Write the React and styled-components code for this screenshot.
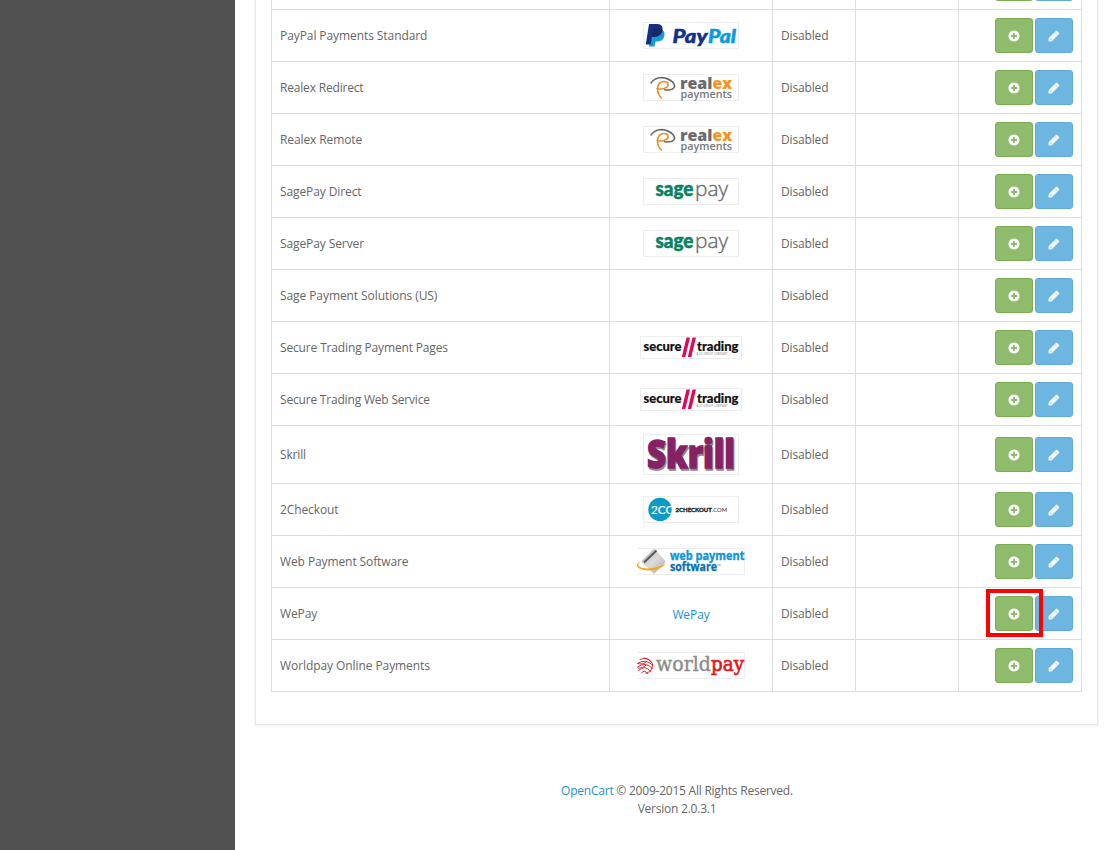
import React from 'react';
import styled, { createGlobalStyle } from 'styled-components';

const GlobalStyle = createGlobalStyle`
  * { box-sizing: border-box; }
  body {
    margin: 0;
    background: #fff;
    color: #666;
    font: 12px/18px "Open Sans", "Noto Sans", sans-serif;
  }
`;

const Page = styled.div`
  display: flex;
  height: 850px;
  overflow: hidden;
`;

const Sidebar = styled.aside`
  flex: 0 0 235px;
  background: #515151;
`;

const Content = styled.main`
  flex: 1;
  padding: 0 20px;
`;

const Panel = styled.section`
  width: 843px;
  height: 725px;
  padding: 0 15px;
  border: 1px solid #e8e8e8;
  border-top: 0;
  box-shadow: 0 1px 1px 1px rgba(0, 0, 0, 0.03);
`;

const Table = styled.div`
  width: 811px;
  border-left: 1px solid #ddd;
`;

const Row = styled.div`
  display: grid;
  grid-template-columns: 338px 163px 83px 103px 123px;
  grid-template-rows: minmax(0, 1fr);
  height: ${(p) => p.$height}px;
`;

const Cell = styled.div`
  display: flex;
  min-height: 0;
  align-items: ${(p) => (p.$clipped ? 'flex-end' : 'center')};
  justify-content: ${(p) => p.$align || 'flex-start'};
  padding: 0 8px ${(p) => (p.$clipped ? 8 : 0)}px;
  border-right: 1px solid #ddd;
  border-bottom: 1px solid #ddd;
  letter-spacing: ${(p) => p.$tracking || 0}px;
  white-space: nowrap;
`;

const Actions = styled.div`
  display: flex;
  gap: 2px;
`;

const IconButton = styled.button`
  display: flex;
  align-items: center;
  justify-content: center;
  width: 38px;
  height: 35px;
  padding: 0;
  border: 1px solid ${(p) => (p.$green ? '#7aae50' : '#5fabd6')};
  border-radius: 3px;
  background: ${(p) => (p.$green ? '#8fbb6c' : '#6db6e1')};
  color: #fff;
`;

const Marked = styled.div`
  position: relative;
  display: flex;
`;

const Highlight = styled.span`
  position: absolute;
  z-index: 1;
  top: -7px;
  left: -9px;
  width: 57px;
  height: 48px;
  border: 4px solid #f00;
`;

const Link = styled.a`
  color: #1e91cf;
  text-decoration: none;
`;

const LogoLink = styled(Link)`
  padding-top: 2px;
  letter-spacing: -0.1px;
`;

const LogoFrame = styled.span`
  display: flex;
  width: ${(p) => p.$w}px;
  height: ${(p) => p.$h}px;
  border: 1px solid #eee;
  letter-spacing: 0;
  ${(p) => p.$bleed && 'border-left-color: transparent;'}

  svg {
    flex: none;
    margin: -1px;
  }
`;

const Footer = styled.footer`
  width: 843px;
  padding: 57px 0 0 1px;
  letter-spacing: -0.23px;
  text-align: center;
`;

const PlusCircle = () => (
  <svg width="12" height="12" viewBox="-70 -70 1676 1676" fill="currentColor">
    <path d="M1216 832v-128q0-26-19-45t-45-19h-256v-256q0-26-19-45t-45-19h-128q-26 0-45 19t-19 45v256h-256q-26 0-45 19t-19 45v128q0 26 19 45t45 19h256v256q0 26 19 45t45 19h128q26 0 45-19t19-45v-256h256q26 0 45-19t19-45zm320-64q0 209-103 385.5t-279.5 279.5-385.5 103-385.5-103-279.5-279.5-103-385.5 103-385.5 279.5-279.5 385.5-103 385.5 103 279.5 279.5 103 385.5z" />
  </svg>
);

const Pencil = () => (
  <svg width="12" height="12" viewBox="0 0 1792 1792" fill="currentColor" stroke="currentColor" strokeWidth="70">
    <path d="M491 1536l91-91-235-235-91 91v107h128v128h107zm523-928q0-22-22-22-10 0-17 7l-542 542q-7 7-7 17 0 22 22 22 10 0 17-7l542-542q7-7 7-17zm-54-192l416 416-832 832h-416v-416zm683 96q0 53-37 90l-166 166-416-416 166-165q36-38 90-38 53 0 91 38l235 234q37 39 37 91z" />
  </svg>
);

const Logo = ({ w = 96, h = 27, bleed, children }) => (
  <LogoFrame $w={w} $h={h} $bleed={bleed}>
    <svg width={w} height={h} viewBox={`0 0 ${w} ${h}`}>{children}</svg>
  </LogoFrame>
);

const PayPal = () => (
  <Logo>
    <path d="M9 7h8q5 1 4.500 6-1 6.500-7 6.500h-2l-1 5H6z" fill="#179bd7" />
    <path d="M6 2h8.500q6 .5 5 6.500-1.200 6.500-8 6.500H9L7.700 22.500H2.800z" fill="#172f80" />
    <path d="M10 7.500q0-1 1-1h6l2.200.8q-.8 7.200-8 7.200H8.800z" fill="#1d2761" />
    <g fontFamily="Lato" fontWeight="900" fontStyle="italic" fontSize="18.500" strokeWidth=".5">
      <text x="29.500" y="21" textLength="35" lengthAdjust="spacingAndGlyphs" fill="#12308a" stroke="#12308a">Pay</text>
      <text x="65" y="21" textLength="28" lengthAdjust="spacingAndGlyphs" fill="#089cdd" stroke="#089cdd">Pal</text>
    </g>
  </Logo>
);

const Realex = () => (
  <Logo>
    <g fill="none" strokeLinecap="round">
      <path d="M8 9C12 3 20 2.500 25 5c7 3.500 8 8 4.500 10q-3.500 1.500-8 .7" stroke="#686a6c" strokeWidth="1.500" />
      <path d="M18 4c7 0 13 4 14 8" stroke="#686a6c" strokeWidth=".8" />
      <path d="M18.500 24C13.500 20 12.500 9 20 7.500c6-.5 7 5 1 7-3 .8-5 .8-7 0" stroke="#f28c22" strokeWidth="1.600" />
    </g>
    <g fontFamily="Open Sans">
      <g fontSize="16.500" fontWeight="800">
        <text x="37" y="15" textLength="32.500" lengthAdjust="spacingAndGlyphs" fill="#696b6d">real</text>
        <text x="69.500" y="15" textLength="19.500" lengthAdjust="spacingAndGlyphs" fill="#f7941e">ex</text>
      </g>
      <text x="37.500" y="23.800" fontSize="11.500" fontWeight="600" textLength="51.500" lengthAdjust="spacingAndGlyphs" fill="#77797b">payments</text>
    </g>
  </Logo>
);

const SagePay = () => (
  <Logo>
    <text x="12.500" y="18" fontFamily="Lato" fontSize="20.500" fontWeight="900" textLength="38" lengthAdjust="spacingAndGlyphs" fill="#078263" stroke="#078263" strokeWidth=".5">sage</text>
    <text x="52" y="18" fontFamily="Open Sans" fontSize="20.500" fontWeight="300" textLength="33" lengthAdjust="spacingAndGlyphs" fill="#696c70" stroke="#696c70" strokeWidth=".4">pay</text>
  </Logo>
);

const SecureTrading = () => (
  <Logo w={102} h={23}>
    <g fontFamily="Lato" fontSize="12.500" fontWeight="900" fill="#161313" stroke="#161313" strokeWidth=".2">
      <text x="3.500" y="15" textLength="38" lengthAdjust="spacingAndGlyphs">secure</text>
      <text x="57" y="15" textLength="41.500" lengthAdjust="spacingAndGlyphs">trading</text>
    </g>
    <path d="M46.500 1.500h3.500l-4.700 19.500h-3.500zM52.500 1.500H56l-4.700 19.500h-3.500z" fill="#dc0a5b" />
    <text x="56.500" y="19" fontFamily="Open Sans" fontSize="2.600" textLength="31" lengthAdjust="spacingAndGlyphs" fill="#888">A UC GROUP COMPANY</text>
  </Logo>
);

const Skrill = () => (
  <Logo h={41}>
    <g fontFamily="Open Sans" fontSize="38.500" fontWeight="800" strokeWidth="1.500">
      <text x="5" y="35.500" textLength="88" lengthAdjust="spacingAndGlyphs" fill="#8f8a8e" stroke="#8f8a8e">Skrill</text>
      <text x="4" y="34" textLength="88" lengthAdjust="spacingAndGlyphs" fill="#862165" stroke="#862165">Skrill</text>
    </g>
  </Logo>
);

const TwoCheckout = () => (
  <Logo>
    <clipPath id="disc"><circle cx="17" cy="13.500" r="11.700" /></clipPath>
    <circle cx="17" cy="13.500" r="11.700" fill="#0d9ac7" />
    <text x="8" y="17.500" fontFamily="Lato" fontSize="11.500" textLength="24" lengthAdjust="spacingAndGlyphs" fill="#fff" stroke="#fff" strokeWidth=".2" clipPath="url(#disc)">2CO</text>
    <g fontFamily="Lato" fontSize="6.200" fill="#222">
      <text x="32.500" y="15.700" fontWeight="900" textLength="36.500" lengthAdjust="spacingAndGlyphs" stroke="#222" strokeWidth=".3">2CHECKOUT</text>
      <text x="69" y="15.700" textLength="15" lengthAdjust="spacingAndGlyphs">.COM</text>
    </g>
  </Logo>
);

const WebPayment = () => (
  <Logo w={108} bleed>
    <defs>
      <linearGradient id="card" x2="1" y2="1">
        <stop stopColor="#aaa" />
        <stop offset=".5" stopColor="#dcdcdc" />
        <stop offset="1" stopColor="#aaa" />
      </linearGradient>
    </defs>
    <path d="M5 12.500L16 1.500q1-.8 2 0l10 11q.8 1 0 2L18 25q-1 1-2 0L5 14.500q-.8-1 0-2z" fill="url(#card)" />
    <path d="M7 14.500L19.500 2.500" stroke="#555" strokeWidth="1.800" />
    <path d="M4 13.500Q-1 17 3 19C9 22 23 20 29.500 14.500Q24 23 11 22.500C2 22-2 18.500 .5 15.500Q2 14 4 13.500z" fill="#f5a623" />
    <g fontFamily="Open Sans" fontWeight="700" fontSize="11.500" strokeWidth=".3">
      <text x="33" y="12" textLength="74.500" lengthAdjust="spacingAndGlyphs" fill="#0d94d5" stroke="#0d94d5">web payment</text>
      <text x="33" y="22.800" textLength="47" lengthAdjust="spacingAndGlyphs" fill="#0870ad" stroke="#0870ad">software</text>
    </g>
    <text x="80" y="20" fontFamily="Open Sans" fontSize="5" fill="#777">™</text>
  </Logo>
);

const Worldpay = () => (
  <Logo w={108} bleed>
    <g fill="none" stroke="#e5262b" strokeWidth="1" strokeLinecap="round">
      <path d="M3 7.500Q9 4.500 14 9.500M1 11Q9 6.500 15.500 13M.5 15Q8 9 15.500 16.500M1.500 18.500Q8 12 13.500 19.500M4.500 21Q7 17 10.500 21.500" />
      <path d="M7 6Q14 7 15.500 12Q16 19 9 21.500M.5 11.500Q6 13 9 10M1 16Q6 17 9 13" />
    </g>
    <g fontFamily="DejaVu Serif, serif" fontSize="20">
      <text x="19" y="19" textLength="55" lengthAdjust="spacingAndGlyphs" fill="#8c8c8b" stroke="#8c8c8b" strokeWidth=".4">world</text>
      <text x="74" y="19" textLength="33" lengthAdjust="spacingAndGlyphs" fill="#e5161d" stroke="#e5161d" strokeWidth=".7">pay</text>
    </g>
  </Logo>
);

const methods = [
  { name: 'PayPal Payments Standard', logo: <PayPal />, tracking: -0.08 },
  { name: 'Realex Redirect', logo: <Realex />, tracking: -0.18 },
  { name: 'Realex Remote', logo: <Realex />, tracking: -0.1 },
  { name: 'SagePay Direct', logo: <SagePay />, tracking: -0.1 },
  { name: 'SagePay Server', logo: <SagePay />, tracking: -0.1 },
  { name: 'Sage Payment Solutions (US)', tracking: -0.08 },
  { name: 'Secure Trading Payment Pages', logo: <SecureTrading />, tracking: -0.15 },
  { name: 'Secure Trading Web Service', logo: <SecureTrading />, tracking: -0.19 },
  { name: 'Skrill', logo: <Skrill />, height: 58, tracking: -0.15 },
  { name: '2Checkout', logo: <TwoCheckout />, tracking: -0.1 },
  { name: 'Web Payment Software', logo: <WebPayment />, tracking: -0.1 },
  { name: 'WePay', logo: <LogoLink>WePay</LogoLink>, marked: true, tracking: -0.1 },
  { name: 'Worldpay Online Payments', logo: <Worldpay />, tracking: -0.08 },
];

const RowActions = ({ marked }) => (
  <Actions>
    <Marked>
      <IconButton $green aria-label="Install"><PlusCircle /></IconButton>
      {marked && <Highlight />}
    </Marked>
    <IconButton aria-label="Edit"><Pencil /></IconButton>
  </Actions>
);

const MethodRow = ({ name, logo, marked, tracking, height = 52 }) => (
  <Row $height={height}>
    <Cell $tracking={tracking}>{name}</Cell>
    <Cell $align="center">{logo}</Cell>
    <Cell $tracking={-0.15}>Disabled</Cell>
    <Cell />
    <Cell $align="flex-end"><RowActions marked={marked} /></Cell>
  </Row>
);

export default function App() {
  return (
    <Page>
      <GlobalStyle />
      <Sidebar />
      <Content>
        <Panel>
          <Table>
            <Row $height={10}>
              <Cell />
              <Cell />
              <Cell />
              <Cell />
              <Cell $align="flex-end" $clipped><RowActions /></Cell>
            </Row>
            {methods.map((m) => <MethodRow key={m.name} {...m} />)}
          </Table>
        </Panel>
        <Footer>
          <Link>OpenCart</Link> © 2009-2015 All Rights Reserved.
          <br />
          Version 2.0.3.1
        </Footer>
      </Content>
    </Page>
  );
}
